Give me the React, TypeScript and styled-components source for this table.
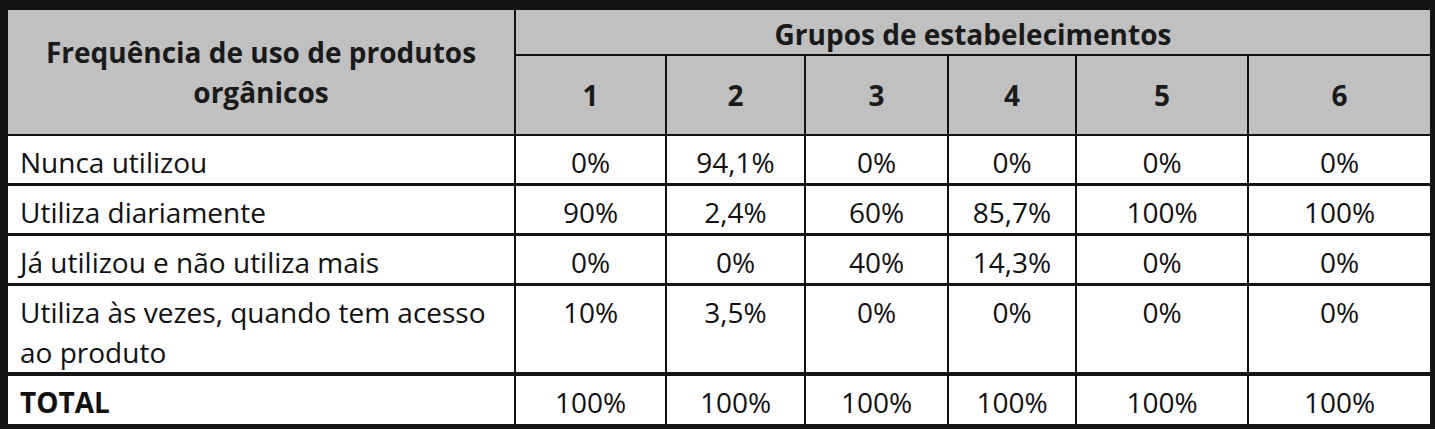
import styled, { createGlobalStyle } from "styled-components";

const GlobalStyle = createGlobalStyle`
  html, body {
    margin: 0;
    padding: 0;
    background: #ffffff;
  }
  body {
    font-family: "Open Sans", Lato, sans-serif;
    color: #111111;
  }
`;

const widths = [508, 151, 139, 143, 128, 172, 181];

const rows = [
  { label: ["Nunca utilizou"], values: ["0%", "94,1%", "0%", "0%", "0%", "0%"], tall: false },
  { label: ["Utiliza diariamente"], values: ["90%", "2,4%", "60%", "85,7%", "100%", "100%"], tall: false },
  { label: ["Já utilizou e não utiliza mais"], values: ["0%", "0%", "40%", "14,3%", "0%", "0%"], tall: false },
  {
    label: ["Utiliza às vezes, quando tem acesso", "ao produto"],
    values: ["10%", "3,5%", "0%", "0%", "0%", "0%"],
    tall: true,
  },
];

export default function App() {
  return (
    <>
      <GlobalStyle />
      <Frame>
        <Table>
          <colgroup>
            {widths.map((w, i) => (
              <col key={i} style={{ width: w }} />
            ))}
          </colgroup>
          <thead>
            <tr>
              <HeadCell rowSpan={2} $height={46}>
                Frequência de uso de produtos
                <br />
                orgânicos
              </HeadCell>
              <GroupCell colSpan={6}>Grupos de estabelecimentos</GroupCell>
            </tr>
            <tr>
              {[1, 2, 3, 4, 5, 6].map((n) => (
                <NumberCell key={n} $last={n === 6}>
                  {n}
                </NumberCell>
              ))}
            </tr>
          </thead>
          <tbody>
            {rows.map((row, i) => (
              <tr key={i}>
                <LabelCell $height={row.tall ? 90 : 50} $line={i === 3 ? 4 : 3}>
                  {row.label.map((part, j) => (
                    <span key={j}>
                      {j > 0 && <br />}
                      {part}
                    </span>
                  ))}
                </LabelCell>
                {row.values.map((v, j) => (
                  <ValueCell key={j} $last={j === 5} $line={i === 3 ? 4 : 3}>
                    {v}
                  </ValueCell>
                ))}
              </tr>
            ))}
            <tr>
              <LabelCell $height={48} $line={0} $bold>
                TOTAL
              </LabelCell>
              {["100%", "100%", "100%", "100%", "100%", "100%"].map((v, j) => (
                <ValueCell key={j} $last={j === 5} $line={0}>
                  {v}
                </ValueCell>
              ))}
            </tr>
          </tbody>
        </Table>
      </Frame>
    </>
  );
}

const Frame = styled.div`
  width: 1435px;
  box-sizing: border-box;
  border-style: solid;
  border-color: #151518;
  border-width: 10px 5px 5px 8px;
  background: #ffffff;
`;

const Table = styled.table`
  width: 1422px;
  table-layout: fixed;
  border-collapse: separate;
  border-spacing: 0;
  font-size: 28px;
  line-height: 40px;

  td,
  th {
    box-sizing: border-box;
    padding: 0;
  }
`;

const HeadCell = styled.th<{ $height: number }>`
  height: ${(p) => p.$height}px;
  background: #c0c0c0;
  font-weight: 700;
  text-align: center;
  vertical-align: middle;
  border-right: 2px solid #111111;
  border-bottom: 2px solid #111111;
  color: #1a1a1a;
`;

const GroupCell = styled.th`
  height: 46px;
  background: #c0c0c0;
  font-weight: 700;
  text-align: center;
  vertical-align: top;
  padding-top: 4px !important;
  border-bottom: 2px solid #111111;
  color: #1a1a1a;
`;

const NumberCell = styled.th<{ $last: boolean }>`
  height: 80px;
  background: #c0c0c0;
  font-weight: 700;
  text-align: center;
  vertical-align: middle;
  border-right: ${(p) => (p.$last ? "none" : "2px solid #111111")};
  border-bottom: 2px solid #111111;
  color: #1a1a1a;
`;

const LabelCell = styled.td<{ $height: number; $line: number; $bold?: boolean }>`
  height: ${(p) => p.$height}px;
  vertical-align: top;
  text-align: left;
  padding: 6px 0 0 12px !important;
  font-weight: ${(p) => (p.$bold ? 700 : 400)};
  border-right: 2px solid #111111;
  border-bottom: ${(p) => (p.$line ? `${p.$line}px solid #151518` : "none")};
`;

const ValueCell = styled.td<{ $last: boolean; $line: number }>`
  vertical-align: top;
  text-align: center;
  padding-top: 6px !important;
  border-right: ${(p) => (p.$last ? "none" : "2px solid #111111")};
  border-bottom: ${(p) => (p.$line ? `${p.$line}px solid #151518` : "none")};
`;
